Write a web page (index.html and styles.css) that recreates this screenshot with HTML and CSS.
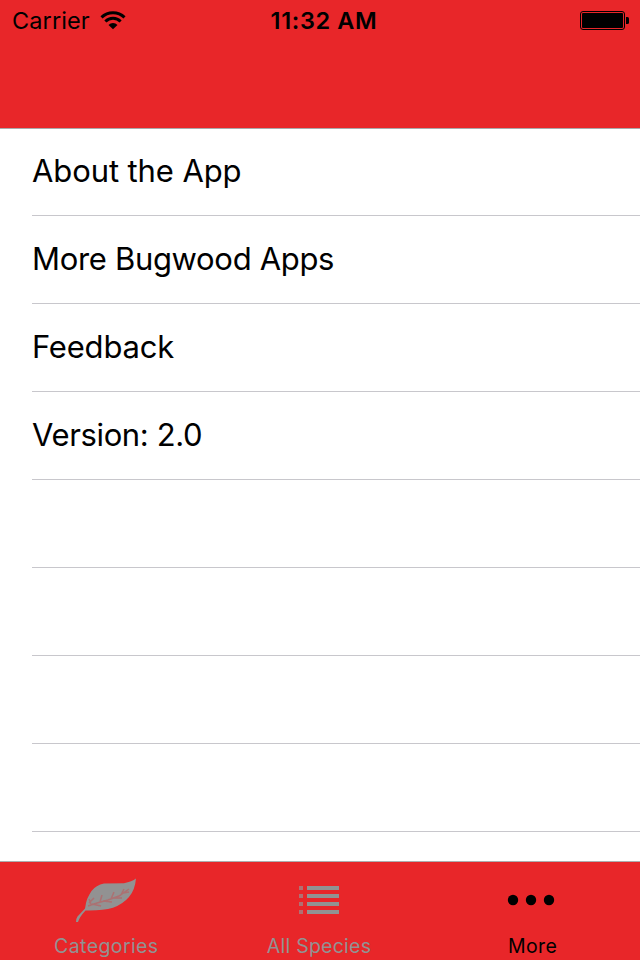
FILE: index.html
```html
<!DOCTYPE html>
<html lang="en">
    <head>
        <meta charset="utf-8" />
        <title>More</title>
        <link rel="stylesheet" href="styles.css">
    </head>
    <body>
        <header class="navbar">
            <div class="status">
                <div class="carrier">
                    <span class="carrier-name">Carrier</span>
                    <svg class="wifi" width="26" height="20" viewBox="0 0 26 20">
                        <path d="M1.500 7.300A16.500 16.500 0 0 1 24.500 7.300M5.400 11.500A10.700 10.700 0 0 1 20.600 11.500" fill="none" stroke="#000" stroke-width="3"/>
                        <path d="M8.500 14.900A6.400 6.400 0 0 1 17.500 14.900L13 19.300Z"/>
                    </svg>
                </div>
                <span class="time">11:32 AM</span>
                <svg class="battery" width="50" height="20" viewBox="0 0 50 20">
                    <rect x=".5" y="1.5" width="44" height="18" rx="2.5" fill="none" stroke="#000"/>
                    <rect x="2" y="3" width="41" height="15" rx="1"/>
                    <path d="M46 7h1.5q1.5 0 1.5 1.5v4q0 1.500-1.500 1.500H46z"/>
                </svg>
            </div>
        </header>

        <ul class="menu">
            <li><span class="about">About the App</span></li>
            <li><span class="apps">More Bugwood Apps</span></li>
            <li><span class="feedback">Feedback</span></li>
            <li><span class="version">Version: 2.0</span></li>
            <li></li>
            <li></li>
            <li></li>
            <li></li>
        </ul>

        <nav class="tabs">
            <a class="tab">
                <svg width="62" height="46" viewBox="0 0 62 46">
                    <path d="M61 .5Q57 3.500 49 5.300L29 5.500Q21 7 16.500 13Q12 20 11 25L10 30.500L2.500 38.500Q.5 41.500 1 44H3Q4.500 39 10.500 32.500Q27 33 38 29.800Q48 26 54 19Q60 12 61 .5Z" fill="#929292"/>
                    <path d="M13 28L22 25L33 22L44 18L54 11M16 26l-2-5M17 26l9 2M25 24l2-7M28 23l9 1M36 21l3-7M39 20l8 0M46 17l3-6M14 25l5-5M48 15l6-1" fill="none" stroke="#e82629" stroke-width="1.5" opacity=".3"/>
                </svg>
                <span class="tab-categories">Categories</span>
            </a>
            <a class="tab">
                <svg width="62" height="46" viewBox="0 0 62 46">
                    <path d="M11 8h4v4h-4zM11 16h4v4h-4zM11 24h4v4h-4zM11 32h4v4h-4z" fill="#b17073"/>
                    <path d="M19 8h32v4H19zM19 16h32v4H19zM19 24h32v4H19zM19 32h32v4H19z" fill="#929292"/>
                </svg>
                <span class="tab-species">All Species</span>
            </a>
            <a class="tab active">
                <svg width="62" height="46" viewBox="0 0 62 46">
                    <circle cx="12" cy="22" r="5.2"/>
                    <circle cx="30" cy="22" r="5.2"/>
                    <circle cx="48" cy="22" r="5.2"/>
                </svg>
                <span class="tab-more">More</span>
            </a>
        </nav>
    </body>
</html>
```

FILE: styles.css
```css
html {
    margin: 0px;
    padding: 0px;
}
body {
    font-family: Inter, 'Liberation Sans', sans-serif;
    display: flex;
    flex-direction: column;
    height: 960px;
    margin: 0px;
    overflow: hidden;
    color: #000;
    background-color: #fff;
}
.navbar {
    box-sizing: border-box;
    flex: none;
    height: 129px;
    background-color: #e82629;
    border-bottom: 1px solid #a9a9ab;
}
.status {
    display: grid;
    grid-template-columns: 1fr auto 1fr;
    align-items: center;
    height: 40px;
    padding: 0px 10px 0px 12px;
    font-size: 23.5px;
}
.carrier {
    display: flex;
    align-items: center;
    gap: 10px;
}
.carrier-name {
    letter-spacing: 0.1px;
}
.time {
    font-weight: 600;
    letter-spacing: 0.65px;
    margin-left: 6px;
}
.battery {
    justify-self: end;
}
.menu {
    flex: 1;
    min-height: 0px;
    margin: -1px 0px 0px;
    padding: 0px 0px 0px 32px;
    list-style: none;
    font-size: 31px;
}
.menu li {
    display: flex;
    align-items: center;
    box-sizing: border-box;
    height: 88px;
    padding-bottom: 2px;
    border-bottom: 1px solid #c8c7cc;
}
.about {
    letter-spacing: -0.1px;
}
.apps {
    letter-spacing: -0.32px;
}
.feedback {
    letter-spacing: -0.2px;
}
.version {
    letter-spacing: -0.36px;
}
.tabs {
    display: grid;
    grid-template-columns: repeat(3, 1fr);
    box-sizing: border-box;
    flex: none;
    height: 99px;
    padding-right: 2px;
    background-color: #e82629;
    border-top: 1px solid #adadaf;
}
.tab {
    display: flex;
    flex-direction: column;
    align-items: center;
    padding-top: 16px;
    font-size: 19.5px;
    line-height: 24px;
    letter-spacing: 0.4px;
    color: #929292;
}
.tab span {
    margin-top: 10px;
}
.tab .tab-species {
    letter-spacing: 0.25px;
}
.tab .tab-more {
    margin-left: 2px;
}
.tab.active {
    color: #000;
}
```
